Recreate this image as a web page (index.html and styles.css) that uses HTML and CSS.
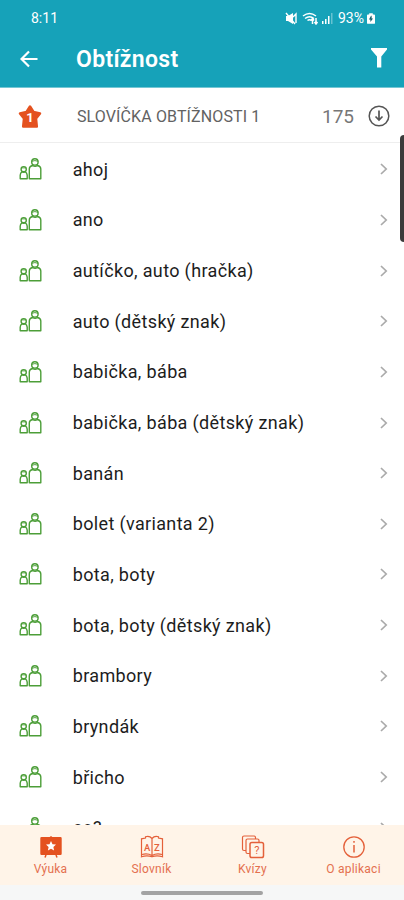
FILE: index.html
```
<!DOCTYPE html>
<html lang="cs">
<head>
<meta charset="utf-8">
<title>Obtížnost</title>
<link rel="stylesheet" href="styles.css">
</head>
<body>
<svg width="0" height="0" class="defs">
  <symbol id="people" viewBox="0 0 24 24">
    <g fill="none" stroke="#4c9e38" stroke-width="1.4">
      <circle cx="15.900" cy="4.900" r="3.200"/>
      <path d="M12.600 4.300q3.300-1.400 6.600 0" stroke-width="1"/>
      <path d="M13.600 8.500q-3.300.7-3.300 3.500v9.700h11.500V12q0-2.800-3.300-3.500-2.400 1.700-4.900 0z" stroke-linejoin="round"/>
      <circle cx="4.700" cy="12.200" r="2.600"/>
      <path d="M2.300 10.900h4.800" stroke-width=".9"/>
      <path d="M8.200 21.700H1.200v-3.500q0-2.500 2-3.400 1.600.8 3.100 0 1.600.8 1.900 3.400z" stroke-linejoin="round"/>
    </g>
  </symbol>
  <symbol id="chevron" viewBox="0 0 8 12">
    <path d="M1 1l5.200 5L1 11" fill="none" stroke="#aaa" stroke-width="1.700"/>
  </symbol>
</svg>
<div class="screen">
  <header>
    <div class="status">
      <span class="time">8:11</span>
      <svg class="signals" width="49" height="14" viewBox="0 0 49 14" fill="#fff">
        <path d="M1 5h2l5-3v11L3 10H1z"/><path d="M1 2l9 11M8 6l3-3v9" fill="none" stroke="#fff" stroke-width="1.4"/>
        <g fill="none" stroke="#fff" stroke-width="1.5"><path d="M18 5q6.500-5 13 0M20 7.500q4.500-3.500 9 0M22.500 9.500q2-1.500 4 0"/><path d="M27.500 13V8M31 7v6M26 9.500l1.500-2 1.500 2M29.500 11l1.500 2 1.500-2"/></g>
        <path d="M37 10h1.500v3H37zM40 8h1.500v5H40zM43 5h1.500v8H43z"/><path d="M46 2h1.500v11H46z" opacity=".35"/>
      </svg>
      <span class="percent">93%</span>
      <svg width="8" height="11" viewBox="0 0 9 12"><path d="M2.500 0h4v1.500H8q1 0 1 1V11q0 1-1 1H1q-1 0-1-1V2.500q0-1 1-1h1.500z" fill="#fff"/><path d="M4.500 3L2.200 7h1.600v2.800L6.800 6H5.200V3z" fill="#145e6b"/></svg>
    </div>
    <div class="bar">
      <svg width="18" height="18" viewBox="0 0 18 18"><path d="M17.500 9H2M9 1.500L1.500 9 9 16.500" fill="none" stroke="#fff" stroke-width="2.200"/></svg>
      <h1>Obtížnost</h1>
      <svg class="filter" width="16" height="20" viewBox="0 0 16 20"><path d="M0 0h16v1.500L10.300 8.500V19.500H6V8.500L0 1.500z" fill="#fff"/></svg>
    </div>
  </header>
  <section class="heading">
    <svg width="26" height="25" viewBox="0 0 26 25"><path d="M13 2.500l3.500 5.500 6.500 1.500-4 5 .8 8H6.200l.8-8-4-5L9.500 8z" fill="#e4511f" stroke="#e4511f" stroke-width="2.500" stroke-linejoin="round"/><text x="13" y="17.500" class="star-number">1</text></svg>
    <h2>SLOVÍČKA OBTÍŽNOSTI 1</h2>
    <span class="count">175</span>
    <svg width="22" height="22" viewBox="0 0 22 22" fill="none" stroke="#555"><circle cx="11" cy="11" r="9.800" stroke-width="1.500"/><path d="M11 5.500v9M7.500 11.500l3.500 3.500 3.500-3.500" stroke-width="1.700"/></svg>
  </section>
  <main>
    <ul>
      <li><svg class="people"><use href="#people"/></svg><span>ahoj</span><svg class="chevron"><use href="#chevron"/></svg></li>
      <li><svg class="people"><use href="#people"/></svg><span>ano</span><svg class="chevron"><use href="#chevron"/></svg></li>
      <li><svg class="people"><use href="#people"/></svg><span>autíčko, auto (hračka)</span><svg class="chevron"><use href="#chevron"/></svg></li>
      <li><svg class="people"><use href="#people"/></svg><span>auto (dětský znak)</span><svg class="chevron"><use href="#chevron"/></svg></li>
      <li><svg class="people"><use href="#people"/></svg><span>babička, bába</span><svg class="chevron"><use href="#chevron"/></svg></li>
      <li><svg class="people"><use href="#people"/></svg><span>babička, bába (dětský znak)</span><svg class="chevron"><use href="#chevron"/></svg></li>
      <li><svg class="people"><use href="#people"/></svg><span>banán</span><svg class="chevron"><use href="#chevron"/></svg></li>
      <li><svg class="people"><use href="#people"/></svg><span>bolet (varianta 2)</span><svg class="chevron"><use href="#chevron"/></svg></li>
      <li><svg class="people"><use href="#people"/></svg><span>bota, boty</span><svg class="chevron"><use href="#chevron"/></svg></li>
      <li><svg class="people"><use href="#people"/></svg><span>bota, boty (dětský znak)</span><svg class="chevron"><use href="#chevron"/></svg></li>
      <li><svg class="people"><use href="#people"/></svg><span>brambory</span><svg class="chevron"><use href="#chevron"/></svg></li>
      <li><svg class="people"><use href="#people"/></svg><span>bryndák</span><svg class="chevron"><use href="#chevron"/></svg></li>
      <li><svg class="people"><use href="#people"/></svg><span>břicho</span><svg class="chevron"><use href="#chevron"/></svg></li>
      <li><svg class="people"><use href="#people"/></svg><span>co?</span><svg class="chevron"><use href="#chevron"/></svg></li>
    </ul>
  </main>
  <div class="thumb"></div>
  <nav>
    <a><svg width="24" height="24" viewBox="0 0 24 24"><path d="M2.500 2h8.200l1.300-1 1.300 1h8.200q1.200 0 1.200 1.200v15.600q0 1.200-1.200 1.200h-19q-1.200 0-1.200-1.200V3.200Q1.300 2 2.500 2z" fill="#e4511f"/><path d="M7 20l-1 2.500M17 20l1 2.500" stroke="#e4511f" stroke-width="1.500"/><path d="M12 6l1.500 3.200 3.500.4-2.600 2.400.7 3.500-3.100-1.700-3.100 1.700.7-3.500L7 9.600l3.500-.4z" fill="#fff"/></svg><span>Výuka</span></a>
    <a><svg width="24" height="24" viewBox="0 0 24 24"><path d="M12 3.500Q9.500.5 5.500 1.800V3l-4 .8v18q5.500-2 10.500 0 5-2 10.500 0v-18l-4-.8V1.800Q14.500.5 12 3.500zV22M2 19.500q5.500-1.500 10 1 4.500-2.500 10-1" fill="none" stroke="#e4603a" stroke-width="1.200"/><text x="7.100" y="15.500" class="book-letter">A</text><text x="16.900" y="15.500" class="book-letter">Z</text></svg><span>Slovník</span></a>
    <a><svg width="24" height="24" viewBox="0 0 24 24"><g fill="#fff4e8" stroke="#e4603a" stroke-width="1.200"><rect x="1.500" y="1" width="13" height="14.500" rx="1.500"/><rect x="5" y="4" width="13" height="14.500" rx="1.500"/><rect x="9" y="7.500" width="13.500" height="15" rx="1.800" stroke-width="1.500"/></g><text x="15.800" y="19.200" class="quiz-mark">?</text></svg><span>Kvízy</span></a>
    <a><svg width="24" height="24" viewBox="0 0 24 24"><circle cx="12" cy="12" r="10.200" fill="none" stroke="#e4603a" stroke-width="1.300"/><path d="M12 6v1.800M12 10v7.500" stroke="#e4603a" stroke-width="1.500"/></svg><span>O aplikaci</span></a>
  </nav>
  <footer><div class="handle"></div></footer>
</div>
</body>
</html>
```

FILE: styles.css
```
* { box-sizing: border-box; }
body { margin: 0; font-family: Roboto, "Liberation Sans", sans-serif; }
svg { display: block; flex: none; }
.defs { position: absolute; }
.screen { position: relative; width: 404px; height: 900px; display: flex; flex-direction: column; overflow: hidden; background: #fff; }
header { height: 88px; background: #16a2b9; border-bottom: 1px solid #75c7d4; color: #fff; }
.status { height: 34px; padding: 2px 29px 0 31px; display: flex; align-items: center; }
.time { flex: 1; font-size: 14px; letter-spacing: 0; }
.percent { font-size: 14px; letter-spacing: 0; margin: 0 3px 0 4px; }
.bar { height: 50px; padding: 0 17px 0 20px; display: flex; align-items: center; }
.bar h1 { flex: 1; margin: 2px 0 0 38px; font-size: 23px; line-height: 30px; font-weight: 600; letter-spacing: .3px; }
.filter { margin-top: -2px; }
.heading { height: 55px; display: flex; align-items: center; padding: 2px 14px 0 17px; border-bottom: 1px solid #eee; color: #626262; }
.heading h2 { flex: 1; margin: 1px 0 0 34px; font-size: 16px; font-weight: 400; letter-spacing: .12px; white-space: nowrap; }
.count { font-size: 19px; letter-spacing: 0; margin: 1px 14px 0 0; color: #777; }
.star-number { font-size: 13px; font-weight: 700; fill: #fff; text-anchor: middle; }
main { height: 682px; overflow: hidden; }
ul { list-style: none; margin: 1px 0 0; padding: 0; }
li { height: 50.65px; display: flex; align-items: center; padding: 0 16px 0 19px; font-size: 18px; color: #1d1d1d; }
li span { flex: 1; margin-left: 29.7px; letter-spacing: .35px; white-space: nowrap; }
.people { width: 24px; height: 24px; }
.chevron { width: 8px; height: 12px; }
.thumb { position: absolute; right: -4px; top: 135px; width: 8px; height: 107px; border-radius: 4px; background: #3b3b3b; }
nav { height: 60px; background: #fff4e8; display: flex; }
nav a { width: 101px; display: flex; flex-direction: column; align-items: center; padding-top: 10px; color: #e4704f; }
nav span { margin-top: 3px; font-size: 12px; line-height: 15px; letter-spacing: .25px; }
.book-letter { font-size: 9.500px; font-weight: 500; fill: #e4603a; text-anchor: middle; }
.quiz-mark { font-size: 11px; fill: #e4603a; text-anchor: middle; }
footer { height: 15px; background: #f6f7f7; display: flex; justify-content: center; padding-top: 6px; }
.handle { width: 122px; height: 4px; border-radius: 2px; background: #a3a3a3; }
```
